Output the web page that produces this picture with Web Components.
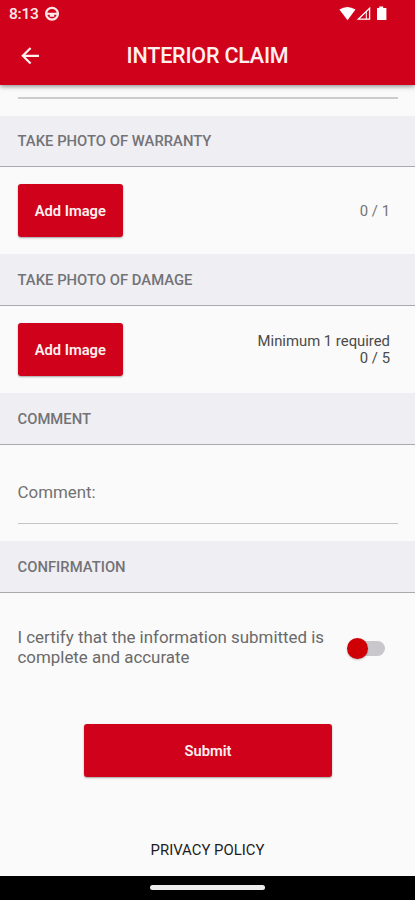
<!DOCTYPE html>
<html lang="en">
<head>
<meta charset="utf-8">
<title>Interior Claim</title>
<style>
html,body{margin:0;padding:0;background:#fafafa}
body{font-family:Roboto,"Noto Sans",sans-serif;color:#666}
</style>
</head>
<body>
<claim-screen></claim-screen>
<script>
function define(name, html) {
  const t = document.createElement('template');
  t.innerHTML = html;
  customElements.define(name, class extends HTMLElement {
    constructor() {
      super();
      this.attachShadow({mode: 'open'}).appendChild(t.content.cloneNode(true));
    }
  });
}

define('status-bar', `<style>
:host{display:flex;height:27px;align-items:center;color:#fde9ea;padding:0 28px 0 9px;box-sizing:border-box}
.time{font-size:15.5px;line-height:27px;padding-top:1px;letter-spacing:-.25px;font-weight:500;width:34.5px}
svg{display:block}
.right{margin-left:auto}
</style>
<span class="time">8:13</span>
<svg width="16" height="16" viewBox="0 0 16 16"><circle cx="8" cy="7.7" r="5.9" fill="none" stroke="#fde9ea" stroke-width="2.3"/><path d="M2.5 6.7H13.5V8.7H10.2V10.7H5.8V8.7H2.5Z" fill="#fde9ea"/></svg>
<svg class="right" width="49" height="16" viewBox="338 5.5 49 16"><path d="M339.4 9Q347.4 3.8 355.5 9L347.5 19.8Z" fill="#fff"/><path d="M358.2 18.7L369.6 7.8V18.7Z" fill="none" stroke="#fff" stroke-width="1.3"/><path d="M366.3 11v8" stroke="#fff" stroke-width="1"/><path d="M377 7.4h2.2V6h4v1.4h3.2v12.2H377Z" fill="#fff"/></svg>`);

define('app-bar', `<style>
:host{display:grid;grid-template-columns:50px 1fr 50px;height:57px;align-items:center}
svg{display:block;margin-left:20px}
h1{margin:0;text-align:center;color:#fff0f0;font-size:21.5px;line-height:28px;font-weight:500;letter-spacing:-.2px;padding-top:1px}
</style>
<svg width="22" height="20" viewBox="20 45.5 22 20"><path d="M39 55.3H23M30.6 47.4L22.8 55.3L30.6 63" fill="none" stroke="#fff0f0" stroke-width="2.2"/></svg>
<h1><slot></slot></h1>`);

define('section-header', `<style>
:host{display:flex;height:var(--h,52px);box-sizing:border-box;background:#efeef3;border-bottom:1.5px solid #aaa9ad;padding-left:17.5px;align-items:center}
h2{margin:0;font-size:14.8px;line-height:20px;font-weight:500;color:#737377;letter-spacing:.02px;padding-top:var(--dy,0)}
</style><h2><slot></slot></h2>`);

define('red-button', `<style>
:host{display:block}
button{display:block;width:100%;height:53px;padding:0;border:0;border-radius:3px;background:#d0021b;color:#fff0f0;font:600 14.7px/20px Roboto,sans-serif;box-shadow:0 1px 2px rgba(0,0,0,.35)}
</style><button><slot></slot></button>`);

define('photo-row', `<style>
:host{display:flex;height:var(--h,87px);box-sizing:border-box;padding:17px 25px 0 18px;align-items:flex-start;justify-content:space-between}
red-button{width:104.5px}
.count{height:53px;display:flex;align-items:center;text-align:right;font-size:14.85px;line-height:17px;color:var(--c,#5c5c5c);padding-top:var(--dy,0);box-sizing:border-box}
</style><red-button><slot name="action"></slot></red-button><div class="count"><slot></slot></div>`);

define('comment-field', `<style>
:host{display:block;height:96px;padding:0 17px 0 17.5px;box-sizing:border-box}
div{height:79px;box-sizing:border-box;border-bottom:1.5px solid #c4c4c4;padding-top:37px;font-size:16.9px;line-height:20px;color:#727272}
</style><div><slot></slot></div>`);

define('toggle-switch', `<style>
:host{display:grid;width:38px;height:22px;align-items:center}
.track,.thumb{grid-area:1/1}
.track{width:32px;height:15px;border-radius:8px;background:#c9c6cc;justify-self:end}
.thumb{width:21px;height:21px;border-radius:50%;background:#ce0005;box-shadow:0 1px 2px rgba(0,0,0,.25)}
</style><span class="track"></span><span class="thumb"></span>`);

define('certify-row', `<style>
:host{display:flex;height:131px;box-sizing:border-box;padding:34px 30px 0 17.5px;justify-content:space-between;align-items:flex-start}
p{margin:0;font-size:16.9px;line-height:20px;color:#6a6a6a;white-space:nowrap}
toggle-switch{margin-top:10px}
</style><p><slot></slot></p><toggle-switch></toggle-switch>`);

define('nav-bar', `<style>
:host{display:flex;height:24.5px;background:#000;align-items:center;justify-content:center}
span{width:115px;height:5px;border-radius:2.5px;background:#ececec;margin-bottom:1px}
</style><span></span>`);

define('claim-screen', `<style>
:host{display:flex;flex-direction:column;width:100%;height:900px;overflow:hidden;background:#fafafa}
header{height:84.5px;flex:none;background:#d0021b;box-shadow:0 1px 5px rgba(0,0,0,.5)}
.top{height:31.5px;flex:none;box-sizing:border-box;padding:12.5px 17px 0 18px}
.top i{display:block;height:1.5px;background:#ccc}
main{display:flex;flex-direction:column}
.submit{width:248.5px;align-self:center;margin-left:1px}
.privacy{margin-top:62.5px;text-align:center;color:#1d1d1d;font-size:14.9px;line-height:20px}
nav-bar{margin-top:auto}
</style>
<header><status-bar></status-bar><app-bar>INTERIOR CLAIM</app-bar></header>
<div class="top"><i></i></div>
<main>
<section-header style="--h:51px">TAKE PHOTO OF WARRANTY</section-header>
<photo-row style="--c:#747474;--dy:2px"><span slot="action">Add Image</span>0 / 1</photo-row>
<section-header style="--dy:1px">TAKE PHOTO OF DAMAGE</section-header>
<photo-row style="--c:#4a4a4a"><span slot="action">Add Image</span><span>Minimum 1 required<br>0 / 5</span></photo-row>
<section-header>COMMENT</section-header>
<comment-field>Comment:</comment-field>
<section-header>CONFIRMATION</section-header>
<certify-row>I certify that the information submitted is<br>complete and accurate</certify-row>
<red-button class="submit">Submit</red-button>
<div class="privacy">PRIVACY POLICY</div>
</main>
<nav-bar></nav-bar>`);
</script>
</body>
</html>
